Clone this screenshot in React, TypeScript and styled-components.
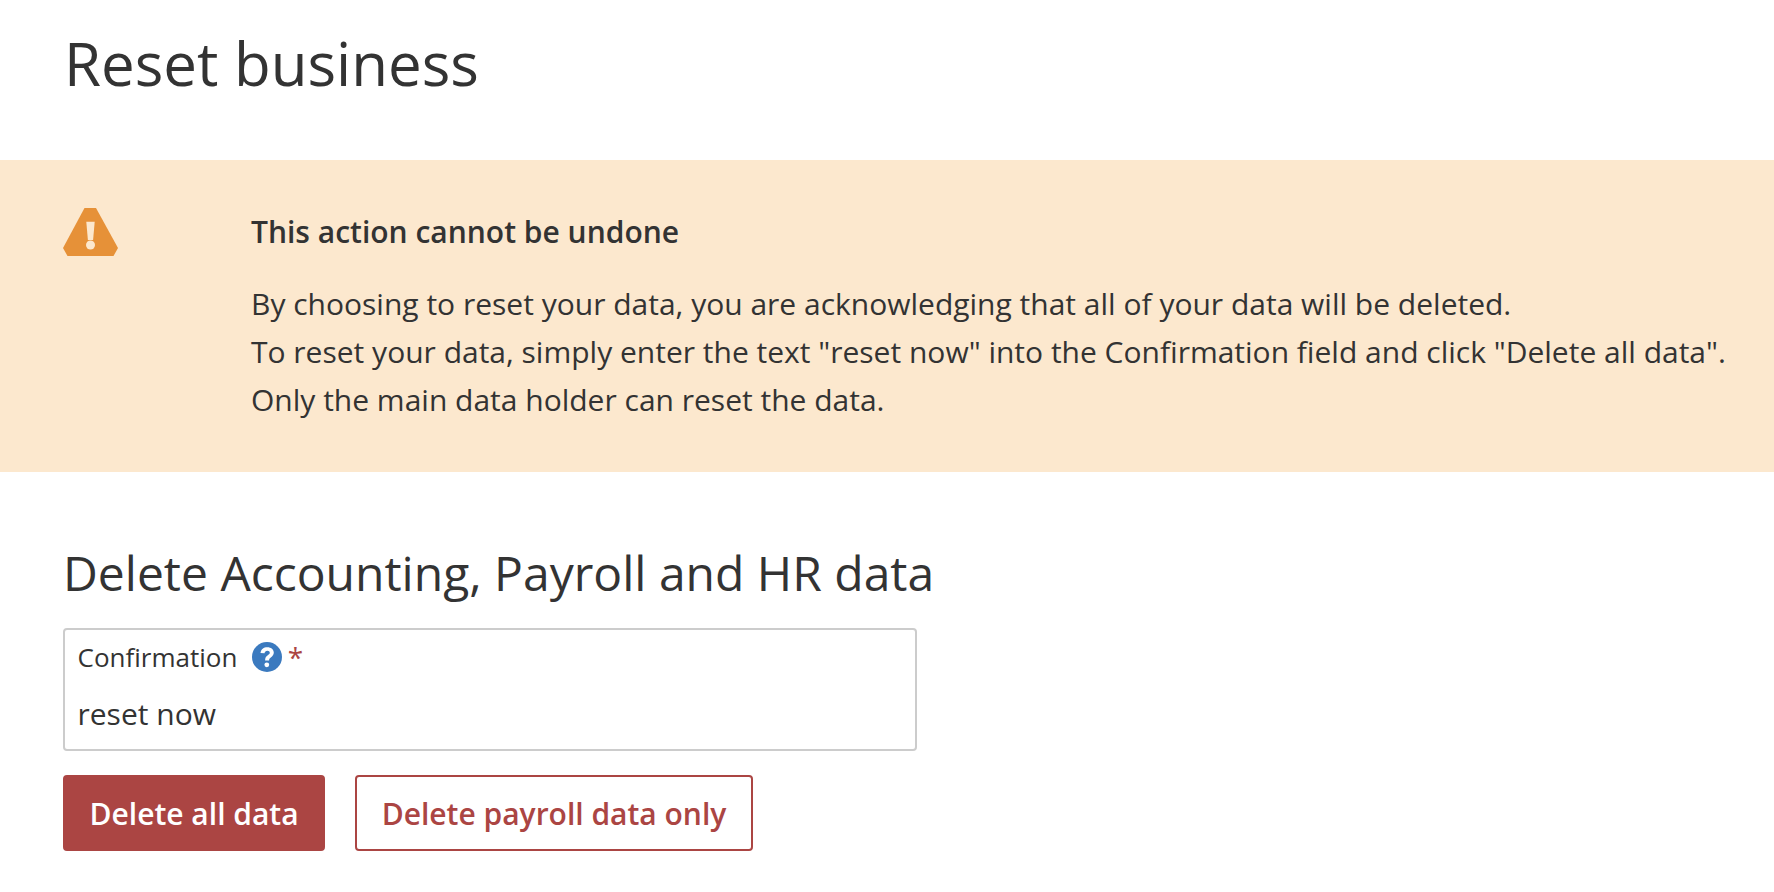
import React from 'react';
import styled, { createGlobalStyle } from 'styled-components';

const colors = {
  text: '#333333',
  banner: '#fce8ce',
  warning: '#e69138',
  red: '#ab4543',
  blue: '#3b7abf',
  border: '#cccccc',
};

const GlobalStyle = createGlobalStyle`
  html, body {
    margin: 0;
    padding: 0;
    background: #ffffff;
    color: ${colors.text};
    font-family: 'Open Sans', 'Liberation Sans', sans-serif;
  }
`;

const App: React.FC = () => (
  <RootWrap>
    <GlobalStyle />
    <PageTitle>Reset business</PageTitle>
    <Banner>
      <IconWrap>
        <svg width="55" height="48" viewBox="0 0 55 48" aria-hidden="true">
          <path d="M21.500 0h11.500l22 40-4.500 8H4.500L0 40Z" fill={colors.warning} />
          <path d="M23.300 13.700h8.400l-1.600 18.300h-5.200Z" fill={colors.banner} />
          <circle cx="27.500" cy="37" r="4.500" fill={colors.banner} />
        </svg>
      </IconWrap>
      <BannerBody>
        <BannerTitle>This action cannot be undone</BannerTitle>
        <BannerText>
          By choosing to reset your data, you are acknowledging that all of your data will be deleted.
          <br />
          To reset your data, simply enter the text "reset now" into the Confirmation field and click "Delete all data".
          <br />
          Only the main data holder can reset the data.
        </BannerText>
      </BannerBody>
    </Banner>
    <Section>
      <SectionTitle>Delete Accounting, Payroll and HR data</SectionTitle>
      <Field>
        <FieldLabel>
          Confirmation
          <HelpIcon>
            <svg width="30" height="30" viewBox="0 0 30 30" aria-hidden="true">
              <circle cx="15" cy="15" r="15" fill={colors.blue} />
              <path
                d="M8.500 11c.4-3.800 3.200-5.800 6.800-5.800 3.800 0 6.500 2.200 6.500 5.400 0 2.400-1.300 3.600-3 4.800-1.300.9-1.700 1.500-1.700 3h-4c0-2.700.8-3.900 2.700-5.200 1.300-.9 2-1.500 2-2.500 0-1.100-1-1.900-2.400-1.900-1.600 0-2.600 1-2.900 2.500Z"
                fill="#ffffff"
              />
              <circle cx="14.800" cy="22.800" r="2.400" fill="#ffffff" />
            </svg>
          </HelpIcon>
          <Required>*</Required>
        </FieldLabel>
        <FieldValue defaultValue="reset now" />
      </Field>
      <ButtonRow>
        <Button $variant="solid">Delete all data</Button>
        <Button $variant="outline">Delete payroll data only</Button>
      </ButtonRow>
    </Section>
  </RootWrap>
);

const RootWrap = styled.div`
  width: 1774px;
  height: 892px;
  overflow: hidden;
`;

const PageTitle = styled.h1`
  margin: 0;
  padding: 22px 64px 0;
  height: 160px;
  box-sizing: border-box;
  font-size: 60px;
  line-height: 82px;
  font-weight: 400;
`;

const Banner = styled.div`
  display: flex;
  height: 312px;
  box-sizing: border-box;
  padding: 48px 0 0 63px;
  background: ${colors.banner};
`;

const IconWrap = styled.div`
  width: 188px;
  flex-shrink: 0;
`;

const BannerBody = styled.div`
  display: flex;
  flex-direction: column;
  padding-top: 4px;
`;

const BannerTitle = styled.div`
  font-size: 30px;
  line-height: 40px;
  font-weight: 600;
`;

const BannerText = styled.div`
  margin-top: 28px;
  font-size: 30px;
  line-height: 48px;
  white-space: nowrap;
`;

const Section = styled.div`
  padding: 0 63px;
`;

const SectionTitle = styled.h2`
  margin: 0;
  padding-top: 70px;
  font-size: 48px;
  line-height: 62px;
  font-weight: 400;
`;

const Field = styled.div`
  display: flex;
  flex-direction: column;
  box-sizing: border-box;
  width: 854px;
  height: 123px;
  margin-top: 24px;
  padding: 11px 12.5px 0;
  border: 2px solid ${colors.border};
  border-radius: 4px;
`;

const FieldLabel = styled.label`
  display: flex;
  align-items: center;
  height: 32px;
  font-size: 26px;
`;

const HelpIcon = styled.span`
  display: flex;
  margin-left: 14.5px;
`;

const Required = styled.span`
  margin-left: 6px;
  color: ${colors.red};
  font-size: 28px;
`;

const FieldValue = styled.input`
  margin-top: 21px;
  padding: 0;
  border: 0;
  outline: 0;
  background: transparent;
  color: ${colors.text};
  font-family: inherit;
  font-size: 30px;
  line-height: 40px;
`;

const ButtonRow = styled.div`
  display: flex;
  gap: 30px;
  margin-top: 24px;
`;

const Button = styled.button<{ $variant: 'solid' | 'outline' }>`
  box-sizing: border-box;
  height: 76px;
  padding: 0 24.5px;
  border: 2px solid ${colors.red};
  border-radius: 4px;
  background: ${(p) => (p.$variant === 'solid' ? colors.red : '#ffffff')};
  color: ${(p) => (p.$variant === 'solid' ? '#ffffff' : colors.red)};
  font-family: inherit;
  font-size: 30px;
  font-weight: 600;
`;

export default App;
